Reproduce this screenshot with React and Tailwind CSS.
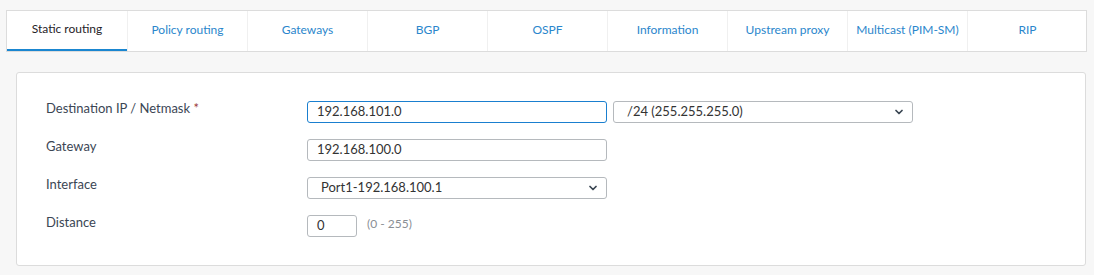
import { ChevronDown } from "lucide-react";

const tabs = [
  "Static routing",
  "Policy routing",
  "Gateways",
  "BGP",
  "OSPF",
  "Information",
  "Upstream proxy",
  "Multicast (PIM-SM)",
  "RIP",
];

function Field({ value, width = "w-[300px]", focused }) {
  return (
    <div
      className={`${width} h-[22px] rounded-[3px] border bg-white flex items-center px-[9px] text-[13px] text-[#333] ${
        focused ? "border-[#1a7fcf]" : "border-[#b5b9bd]"
      }`}
    >
      {value}
    </div>
  );
}

function Select({ value }) {
  return (
    <div className="w-[300px] h-[22px] rounded-[3px] border border-[#b5b9bd] bg-white flex items-center justify-between pl-[13px] pr-[7px] text-[13px] text-[#333]">
      <span>{value}</span>
      <ChevronDown size={12} strokeWidth={3.5} className="text-[#3a4653]" />
    </div>
  );
}

function Row({ label, required, children }) {
  return (
    <div className="flex items-start h-[22px]">
      <div className="w-[261px] -mt-[2px] text-[13px] text-[#3b4654]">
        {label}
        {required && <span className="text-[#9c3a3a]"> *</span>}
      </div>
      <div className="flex items-center gap-[6px]">{children}</div>
    </div>
  );
}

export default function App() {
  return (
    <div
      className="w-[1094px] h-[275px] bg-[#f7f7f7] pt-[10px] pl-[6px]"
      style={{ fontFamily: "Lato, 'Liberation Sans', sans-serif" }}
    >
      <div className="flex w-[1081px] h-[42px] bg-white border border-[#dcdcdc]">
        {tabs.map((t, i) => (
          <div
            key={t}
            className={`w-[120px] shrink-0 flex items-center justify-center text-[12px] pb-[2px] ${
              i > 0 ? "border-l border-[#f0f0f0]" : ""
            } ${
              i === 0
                ? "text-[#1f2328] border-b-[2px] border-b-[#1a86d0]"
                : "text-[#2a86cc]"
            }`}
          >
            {t}
          </div>
        ))}
      </div>
      <div className="ml-[10px] mt-[20px] w-[1070px] h-[194px] bg-white border border-[#dcdcdc] rounded-[3px] pl-[29px] pt-[28px] flex flex-col gap-[16px]">
        <Row label="Destination IP / Netmask" required>
          <Field value="192.168.101.0" focused />
          <Select value="/24 (255.255.255.0)" />
        </Row>
        <Row label="Gateway">
          <Field value="192.168.100.0" />
        </Row>
        <Row label="Interface">
          <Select value="Port1-192.168.100.1" />
        </Row>
        <Row label="Distance">
          <Field value="0" width="w-[50px]" />
          <span className="text-[12px] text-[#8a8f95] ml-[4px] -mt-[4px]">(0 - 255)</span>
        </Row>
      </div>
    </div>
  );
}
